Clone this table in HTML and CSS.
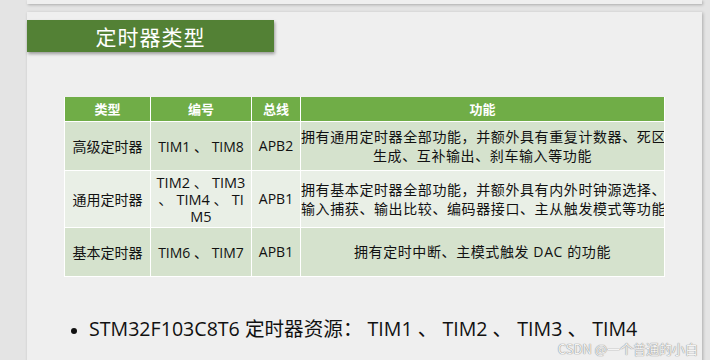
FILE: index.html
```html
<!DOCTYPE html>
<html lang="zh">
<head>
<meta charset="utf-8">
<link rel="stylesheet" href="styles.css">
</head>
<body>
<div class="viewer">
  <div class="slide prev"></div>
  <div class="slide main">
    <div class="title-bar">定时器类型</div>
    <table class="timers">
      <colgroup><col class="c1"><col class="c2"><col class="c3"><col class="c4"></colgroup>
      <thead>
        <tr class="head"><th>类型</th><th>编号</th><th>总线</th><th>功能</th></tr>
      </thead>
      <tbody>
        <tr class="band r1">
          <td>高级定时器</td><td>TIM1 、 TIM8</td><td>APB2</td>
          <td class="func">拥有通用定时器全部功能，并额外具有重复计数器、死区<br>生成、互补输出、刹车输入等功能</td>
        </tr>
        <tr class="light r2">
          <td>通用定时器</td><td class="tims">TIM2 、 TIM3<br>、 TIM4 、 TI<br>M5</td><td>APB1</td>
          <td class="func">拥有基本定时器全部功能，并额外具有内外时钟源选择、<br>输入捕获、输出比较、编码器接口、主从触发模式等功能</td>
        </tr>
        <tr class="band r3">
          <td>基本定时器</td><td>TIM6 、 TIM7</td><td>APB1</td>
          <td class="func">拥有定时中断、主模式触发 DAC 的功能</td>
        </tr>
      </tbody>
    </table>
    <ul class="points">
      <li>STM32F103C8T6 定时器资源： TIM1 、 TIM2 、 TIM3 、 TIM4</li>
    </ul>
  </div>
</div>
<div class="watermark">CSDN @一个普通的小白</div>
</body>
</html>
```
FILE: styles.css
```css
html, body {
  margin: 0;
  padding: 0;
  height: 100%;
  overflow: hidden;
}
body {
  background: #e4e4e4;
  font-family: "Open Sans", "Noto Sans CJK SC", sans-serif;
  color: #111;
}
.viewer {
  display: flex;
  flex-direction: column;
  gap: 8px;
  padding-left: 27px;
  width: 675px;
}
.slide {
  background: #efefef;
  box-shadow: 1px 1px 3px rgba(0,0,0,0.25);
}
.prev {
  height: 4px;
}
.main {
  height: 360px;
  padding-top: 8px;
  box-sizing: border-box;
}
.title-bar {
  width: 247px;
  height: 32px;
  background: #538135;
  color: #fff;
  font-family: "Noto Sans CJK SC", sans-serif;
  font-size: 21px;
  line-height: 32px;
  text-align: center;
  letter-spacing: 1px;
  box-shadow: 1px 2px 3px rgba(0,0,0,0.35);
}
.timers {
  margin: 45px 0 0 37px;
  border-collapse: collapse;
  table-layout: fixed;
  width: 600px;
  font-size: 14px;
}
.c1 { width: 86px; }
.c2 { width: 101px; }
.c3 { width: 49px; }
.c4 { width: 364px; }
.timers th, .timers td {
  border: 1px solid #fff;
  padding: 0;
  text-align: center;
  vertical-align: middle;
  white-space: nowrap;
  overflow: hidden;
}
.timers th {
  background: #70ad47;
  color: #fff;
  font-family: "Noto Sans CJK SC", sans-serif;
  font-weight: bold;
  font-size: 13px;
  border-top: 0;
}
.head { height: 24px; }
.band td { background: #d5e2cd; }
.light td { background: #e9efe6; }
.r1 { height: 49px; }
.r2 { height: 57px; }
.r3 { height: 49px; }
.func {
  line-height: 19px;
  letter-spacing: 0.6px;
}
.timers td.tims {
  line-height: 17px;
  padding-top: 2px;
  font-size: 14.5px;
}
.points {
  margin: 38px 0 0 0;
  padding: 0 0 0 62px;
  font-size: 19.6px;
  line-height: 28px;
  list-style: disc;
}
.points li::marker {
  font-size: 16px;
}
.watermark {
  position: absolute;
  right: 12px;
  bottom: 2px;
  font-family: "Noto Sans CJK SC", sans-serif;
  font-size: 13px;
  color: #f4f4f4;
  text-shadow: 0 0 1px #888, 0 0 1px #888;
}
```
